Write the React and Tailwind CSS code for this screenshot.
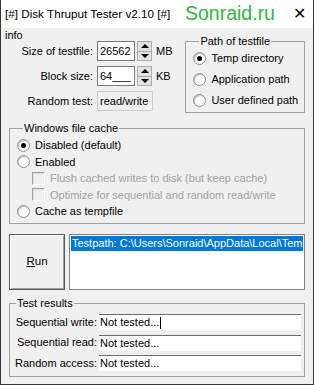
import React from "react";

const F = { fontFamily: '"Liberation Sans", Arial, sans-serif' };

function Spinner() {
  return (
    <div className="flex flex-col w-[15px] h-[20px] border border-[#adadad] bg-[#e1e1e1]">
      <div className="flex-1 flex items-center justify-center border-b border-[#adadad]">
        <div className="w-0 h-0 border-l-[4px] border-r-[4px] border-b-[4px] border-l-transparent border-r-transparent border-b-black" />
      </div>
      <div className="flex-1 flex items-center justify-center">
        <div className="w-0 h-0 border-l-[4px] border-r-[4px] border-t-[4px] border-l-transparent border-r-transparent border-t-black" />
      </div>
    </div>
  );
}

function Radio({ checked, label }) {
  return (
    <div className="flex items-center gap-[5px] whitespace-nowrap">
      <div className="w-[13px] h-[13px] shrink-0 rounded-full border border-[#8e8e8e] bg-white flex items-center justify-center shadow-[inset_1px_1px_1px_rgba(0,0,0,0.25)]">
        {checked && <div className="w-[5px] h-[5px] rounded-full bg-black" />}
      </div>
      <span>{label}</span>
    </div>
  );
}

function Check({ label }) {
  return (
    <div className="flex items-center gap-[5px] text-[#a0a0a0] whitespace-nowrap">
      <div className="w-[13px] h-[13px] shrink-0 border border-t-[#a0a0a0] border-l-[#a0a0a0] border-b-white border-r-white bg-[#f0f0f0] shadow-[inset_1px_1px_0_#dcdcdc]" />
      <span>{label}</span>
    </div>
  );
}

function Group({ title, className, children }) {
  return (
    <fieldset className={"border border-[#a0a0a0] " + className}>
      <legend className="ml-[6px] px-[1px] leading-[12px] whitespace-nowrap">{title}</legend>
      {children}
    </fieldset>
  );
}

export default function App() {
  return (
    <div
      className="w-[314px] h-[385px] bg-[#f0f0f0] border-l border-r border-b border-[#3b3633] flex flex-col text-[11px] text-black overflow-hidden"
      style={F}
    >
      {/* Title bar */}
      <div className="h-[28px] bg-white flex items-center shrink-0 whitespace-nowrap">
        <span className="ml-[4px] w-[180px] text-[11.7px] leading-none">[#] Disk Thruput Tester v2.10 [#]</span>
        <span className="text-[19.5px] leading-none text-[#2db83d]">Sonraid.ru</span>
        <span className="ml-auto mr-[7px] text-[16px] leading-none font-light">✕</span>
      </div>

      <div className="flex flex-col px-[8px]">
        {/* top */}
        <div className="flex">
          <div className="flex flex-col w-[177px] whitespace-nowrap">
            <span className="leading-[12px] -ml-[4px] mt-[1px]">info</span>
            <div className="flex items-center h-[20px]">
              <span className="w-[84px] text-right">Size of testfile:</span>
              <div className="ml-[4px] w-[38px] h-[20px] bg-white border border-[#7a7a7a] px-[2px] leading-[18px]">26562</div>
              <div className="ml-[2px]"><Spinner /></div>
              <span className="ml-[4px]">MB</span>
            </div>
            <div className="flex items-center h-[20px] mt-[5px]">
              <span className="w-[84px] text-right">Block size:</span>
              <div className="ml-[4px] w-[38px] h-[20px] bg-white border border-[#7a7a7a] px-[2px] leading-[18px]">64___</div>
              <div className="ml-[2px]"><Spinner /></div>
              <span className="ml-[4px]">KB</span>
            </div>
            <div className="flex items-center h-[20px] mt-[5px]">
              <span className="w-[84px] text-right">Random test:</span>
              <div className="ml-[4px] w-[56px] h-[20px] border border-[#cccccc] px-[2px] leading-[18px] overflow-hidden">read/write</div>
            </div>
          </div>
          <Group title="Path of testfile" className="w-[120px] h-[78px] mt-[7px] pl-[7px] pt-[5px]">
            <div className="flex flex-col gap-[8px] leading-[13px]">
              <Radio checked label="Temp directory" />
              <Radio label="Application path" />
              <Radio label="User defined path" />
            </div>
          </Group>
        </div>

        {/* windows file cache */}
        <Group title="Windows file cache" className="mt-[9px] h-[102px] pl-[7px] pt-[3px]">
          <div className="flex flex-col leading-[16.5px]">
            <Radio checked label="Disabled (default)" />
            <Radio label="Enabled" />
            <div className="pl-[15px] flex flex-col">
              <Check label="Flush cached writes to disk (but keep cache)" />
              <Check label="Optimize for sequential and random read/write" />
            </div>
            <Radio label="Cache as tempfile" />
          </div>
        </Group>

        {/* run + list */}
        <div className="flex mt-[10px] h-[56px]">
          <div className="w-[56px] h-[56px] border border-[#5a5a5a] bg-[#f0f0f0] shadow-[inset_1px_1px_0_#ffffff,inset_-1px_-1px_0_#a0a0a0] flex items-center justify-center text-[11.5px]">
            <span><span className="underline">R</span>un</span>
          </div>
          <div className="ml-[4px] flex-1 border border-[#828282] bg-white p-[1px] overflow-hidden">
            <div className="bg-[#0078d7] text-white h-[15px] leading-[15px] whitespace-nowrap pl-[1px] overflow-hidden">
              Testpath: C:\Users\Sonraid\AppData\Local\Temp
            </div>
          </div>
        </div>

        {/* test results */}
        <Group title="Test results" className="mt-[7px] h-[80px] pr-[3px] pt-[5px]">
          <div className="flex flex-col gap-[4.5px]">
            {["Sequential write:", "Sequential read:", "Random access:"].map((l, i) => (
              <div key={l} className="flex items-center h-[16px] whitespace-nowrap">
                <span className="w-[87px] text-right">{l}</span>
                <div className="ml-[2px] flex-1 h-[16px] bg-white border-t border-[#6d6d6d] pl-[1px] flex items-center">
                  Not tested...{i === 0 && <span className="inline-block w-[1px] h-[12px] bg-black ml-[1px]" />}
                </div>
              </div>
            ))}
          </div>
        </Group>
      </div>
    </div>
  );
}
